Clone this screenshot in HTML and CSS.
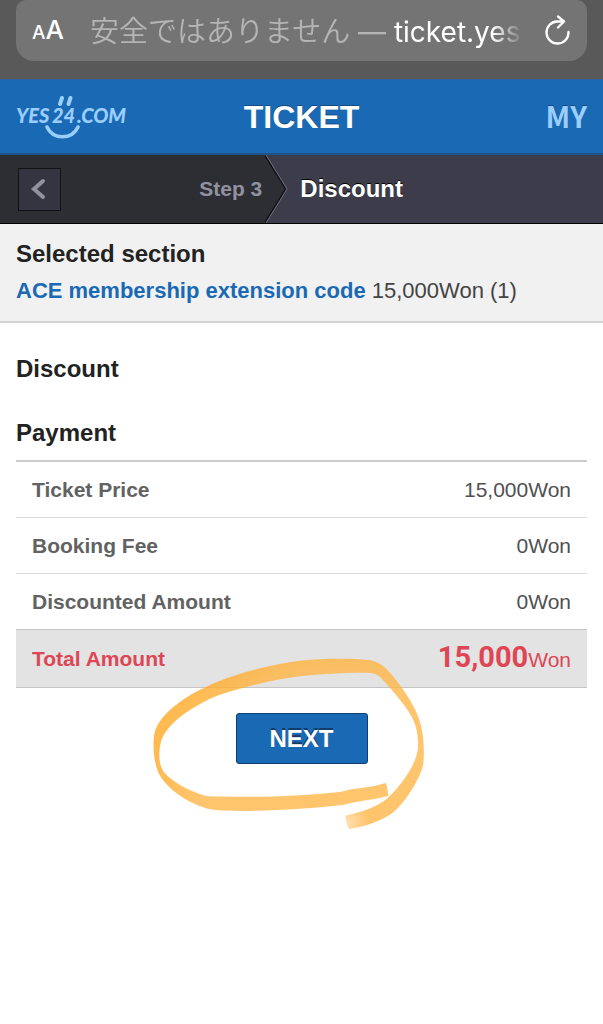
FILE: index.html
```html
<!DOCTYPE html>
<html lang="en">
<head>
<meta charset="utf-8">
<meta name="viewport" content="width=device-width, initial-scale=1">
<title>YES24 Ticket</title>
<link rel="stylesheet" href="styles.css">
</head>
<body>
<div class="browser">
  <div class="address">
    <button class="text-size" type="button" aria-label="Text size"><span class="small-a">A</span><span class="big-a">A</span></button>
    <div class="url"><span class="warning"><span class="message" lang="ja">安全ではありません</span> —</span> <span class="host">ticket.yes</span></div>
    <button class="reload" type="button" aria-label="Reload">
      <svg width="28" height="32" viewBox="0 0 28 32" fill="none" stroke="#fff" stroke-width="2.300" stroke-linecap="round" stroke-linejoin="round"><path d="M20.500 6.500H14A11 11 0 1 0 25.500 17"/><path d="M15 1.500L21 6.500L15 12.500"/></svg>
    </button>
  </div>
</div>
<header class="header">
  <a class="logo" href="#" aria-label="YES24.COM">
    <svg width="114" height="46" viewBox="0 0 114 46">
      <g class="logo-text"><text x="0" y="29">YES</text><text x="36" y="29">24</text><text x="61" y="29">.COM</text></g>
      <g fill="none" stroke="#9aceff" stroke-linecap="round"><path stroke-width="4" d="M46 4l-2 6M54.500 4l-2 6"/><path stroke-width="3.600" d="M31 33c6 13 25 13 31 0"/></g>
    </svg>
  </a>
  <h1 class="title">TICKET</h1>
  <a class="my" href="#">MY</a>
</header>
<nav class="steps">
  <div class="previous">
    <button class="back" type="button" aria-label="Back"><svg width="20" height="22" viewBox="0 0 20 22" fill="none" stroke="#9192a0" stroke-width="4" stroke-linecap="round"><path d="M13 3L4 11l9 8"/></svg></button>
    <span class="step">Step 3</span>
  </div>
  <svg class="divider" width="23" height="68" viewBox="0 0 23 68"><path fill="#2d2d34" d="M0 0L21 34 0 68z"/><path fill="none" stroke="#101016" stroke-width="2" d="M0 0L21 34 0 68"/><path fill="none" stroke="#777782" d="M1 0L22 34 1 68"/></svg>
  <h2 class="current">Discount</h2>
</nav>
<section class="selected">
  <h2 class="heading">Selected section</h2>
  <p class="ticket"><strong>ACE membership extension code</strong> 15,000Won (1)</p>
</section>
<main class="main">
  <h2 class="heading">Discount</h2>
  <h2 class="heading payment">Payment</h2>
  <table class="prices">
    <tbody>
      <tr><th scope="row">Ticket Price</th><td>15,000Won</td></tr>
      <tr><th scope="row">Booking Fee</th><td>0Won</td></tr>
      <tr><th scope="row">Discounted Amount</th><td>0Won</td></tr>
      <tr class="total"><th scope="row">Total Amount</th><td><strong>15,000</strong>Won</td></tr>
    </tbody>
  </table>
  <div class="actions">
    <button class="next" type="button">NEXT</button>
    <svg class="marker" width="300" height="200" viewBox="0 0 900 600" aria-hidden="true">
      <defs>
        <radialGradient id="ink" gradientUnits="userSpaceOnUse" cx="616" cy="548" r="600"><stop offset="0" stop-color="#ffb84d" stop-opacity=".5"/><stop offset=".11" stop-color="#ffb84d"/><stop offset=".75" stop-color="#ffb84d"/><stop offset="1" stop-color="#ffab2b"/></radialGradient>
      </defs>
      <path fill="url(#ink)" opacity=".82" d="M745 468C700 480 655 482 610 495C520 505 390 513 300 513C250 512 220 511 198 505C130 482 78 443 55 398C38 355 37 301 46 270C68 214 137 166 225 128C315 91 410 71 480 62C560 54 630 55 685 60C713 63 732 78 750 98C790 143 830 205 841 250C850 280 854 330 850 370C846 405 800 485 758 519C720 545 680 558 630 567Q622 565 616 530Q618 524 625 525C670 515 712 500 742 475C775 445 828 380 834 325C836 270 824 241 802 209C781 178 752 145 728 119C715 104 704 99 680 98C610 98 540 102 480 109C395 120 280 147 210 176C130 215 80 257 64 300C51 355 59 388 83 408C112 434 161 460 205 469C300 472 460 472 600 456C650 442 690 445 735 429Q742 430 745 468Z"/>
    </svg>
  </div>
</main>
</body>
</html>
```
FILE: styles.css
```css
* { box-sizing: border-box; }
body { min-height: 100vh; margin: 0; background: #fff; color: #222; font-family: "Liberation Sans", Arial, sans-serif; }
h1, h2, p { margin: 0; }
button { padding: 0; border: 0; background: none; color: inherit; font-family: inherit; }
a { text-decoration: none; }
svg { display: block; }

.browser { padding: 0 16px 18px; background: #595959; }
.address { display: flex; align-items: center; height: 61px; padding: 0 16px; background: #747474; border-radius: 10px 10px 18px 18px; color: #fff; font-family: Inter, "Noto Sans CJK JP", sans-serif; }
.text-size { display: flex; align-items: baseline; width: 58px; height: 34px; font-family: Inter, sans-serif; font-weight: 500; }
.small-a { font-size: 19px; line-height: 32px; }
.big-a { font-size: 26px; line-height: 32px; }
.url { flex: 1; min-width: 0; padding: 4px 0; white-space: nowrap; font-size: 28px; line-height: 44px; -webkit-mask-image: linear-gradient(to right, #000 93%, transparent); mask-image: linear-gradient(to right, #000 93%, transparent); }
.warning { color: #b5b5b5; }
.message { font-family: "Noto Sans CJK JP", sans-serif; font-size: 29px; font-weight: 350; }
.reload { margin-left: 20px; }

.header { display: grid; grid-template-columns: 1fr auto 1fr; align-items: center; height: 76px; padding: 0 16px; background: #1a69b4; border-top: 1px solid #2f6296; border-bottom: 2px solid #20548a; }
.logo-text { fill: #9aceff; font: italic 900 20px Lato, sans-serif; }
.title { color: #fff; font-size: 32px; line-height: 36px; text-shadow: 0 -1px 0 #124a80; }
.my { justify-self: end; padding-bottom: 4px; color: #9aceff; font: 700 29px/36px "Noto Sans CJK KR", sans-serif; text-shadow: 0 -1px 0 #124a80; }

.steps { display: flex; align-items: center; height: 69px; background: #3c3c4a; border-bottom: 1px solid #000; }
.previous { display: flex; flex: 0 0 44%; align-items: center; justify-content: space-between; align-self: stretch; padding: 0 3px 0 18px; background: #2d2d34; }
.back { display: grid; place-items: center; width: 43px; height: 43px; border: 1px solid #111116; background: #353541; }
.step { color: #9192a0; font-size: 21px; font-weight: 700; line-height: 24px; }
.current { padding-left: 12px; color: #fff; font-size: 24px; line-height: 28px; text-shadow: 0 -1px 0 #000; }

.selected { padding: 16px 16px 15px; background: #f1f1f1; border-bottom: 2px solid #d4d4d4; }
.heading { font-size: 24px; line-height: 28px; }
.ticket { padding-top: 8px; color: #444; font-size: 22px; line-height: 30px; }
.ticket strong { color: #1a69b4; }

.main { padding: 32px 16px 80px; }
.payment { margin-top: 36px; }
.prices { width: 100%; margin-top: 13px; border-collapse: separate; border-spacing: 0; border-top: 2px solid #ccc; font-size: 21px; line-height: 24px; }
.prices th, .prices td { height: 56px; padding: 0 16px; border-bottom: 1px solid #ddd; }
.prices th { color: #626262; text-align: left; }
.prices td { color: #505050; text-align: right; }
.prices tr:nth-child(3) > * { border-color: #c4c4c4; }
.prices .total > * { height: 58px; background: #e3e3e3; border-color: #c4c4c4; color: #df4655; }
.total strong { font-family: Roboto, sans-serif; font-size: 29px; }

.actions { position: relative; display: flex; justify-content: center; padding-top: 25px; }
.next { width: 132px; height: 51px; background: #1a69b4; border: 1px solid #103e70; border-radius: 3px; color: #fff; font-size: 24px; font-weight: 700; text-shadow: 0 -2px 0 #123c6a; }
.marker { position: absolute; top: -48px; left: calc(50% - 162px); pointer-events: none; }
```
